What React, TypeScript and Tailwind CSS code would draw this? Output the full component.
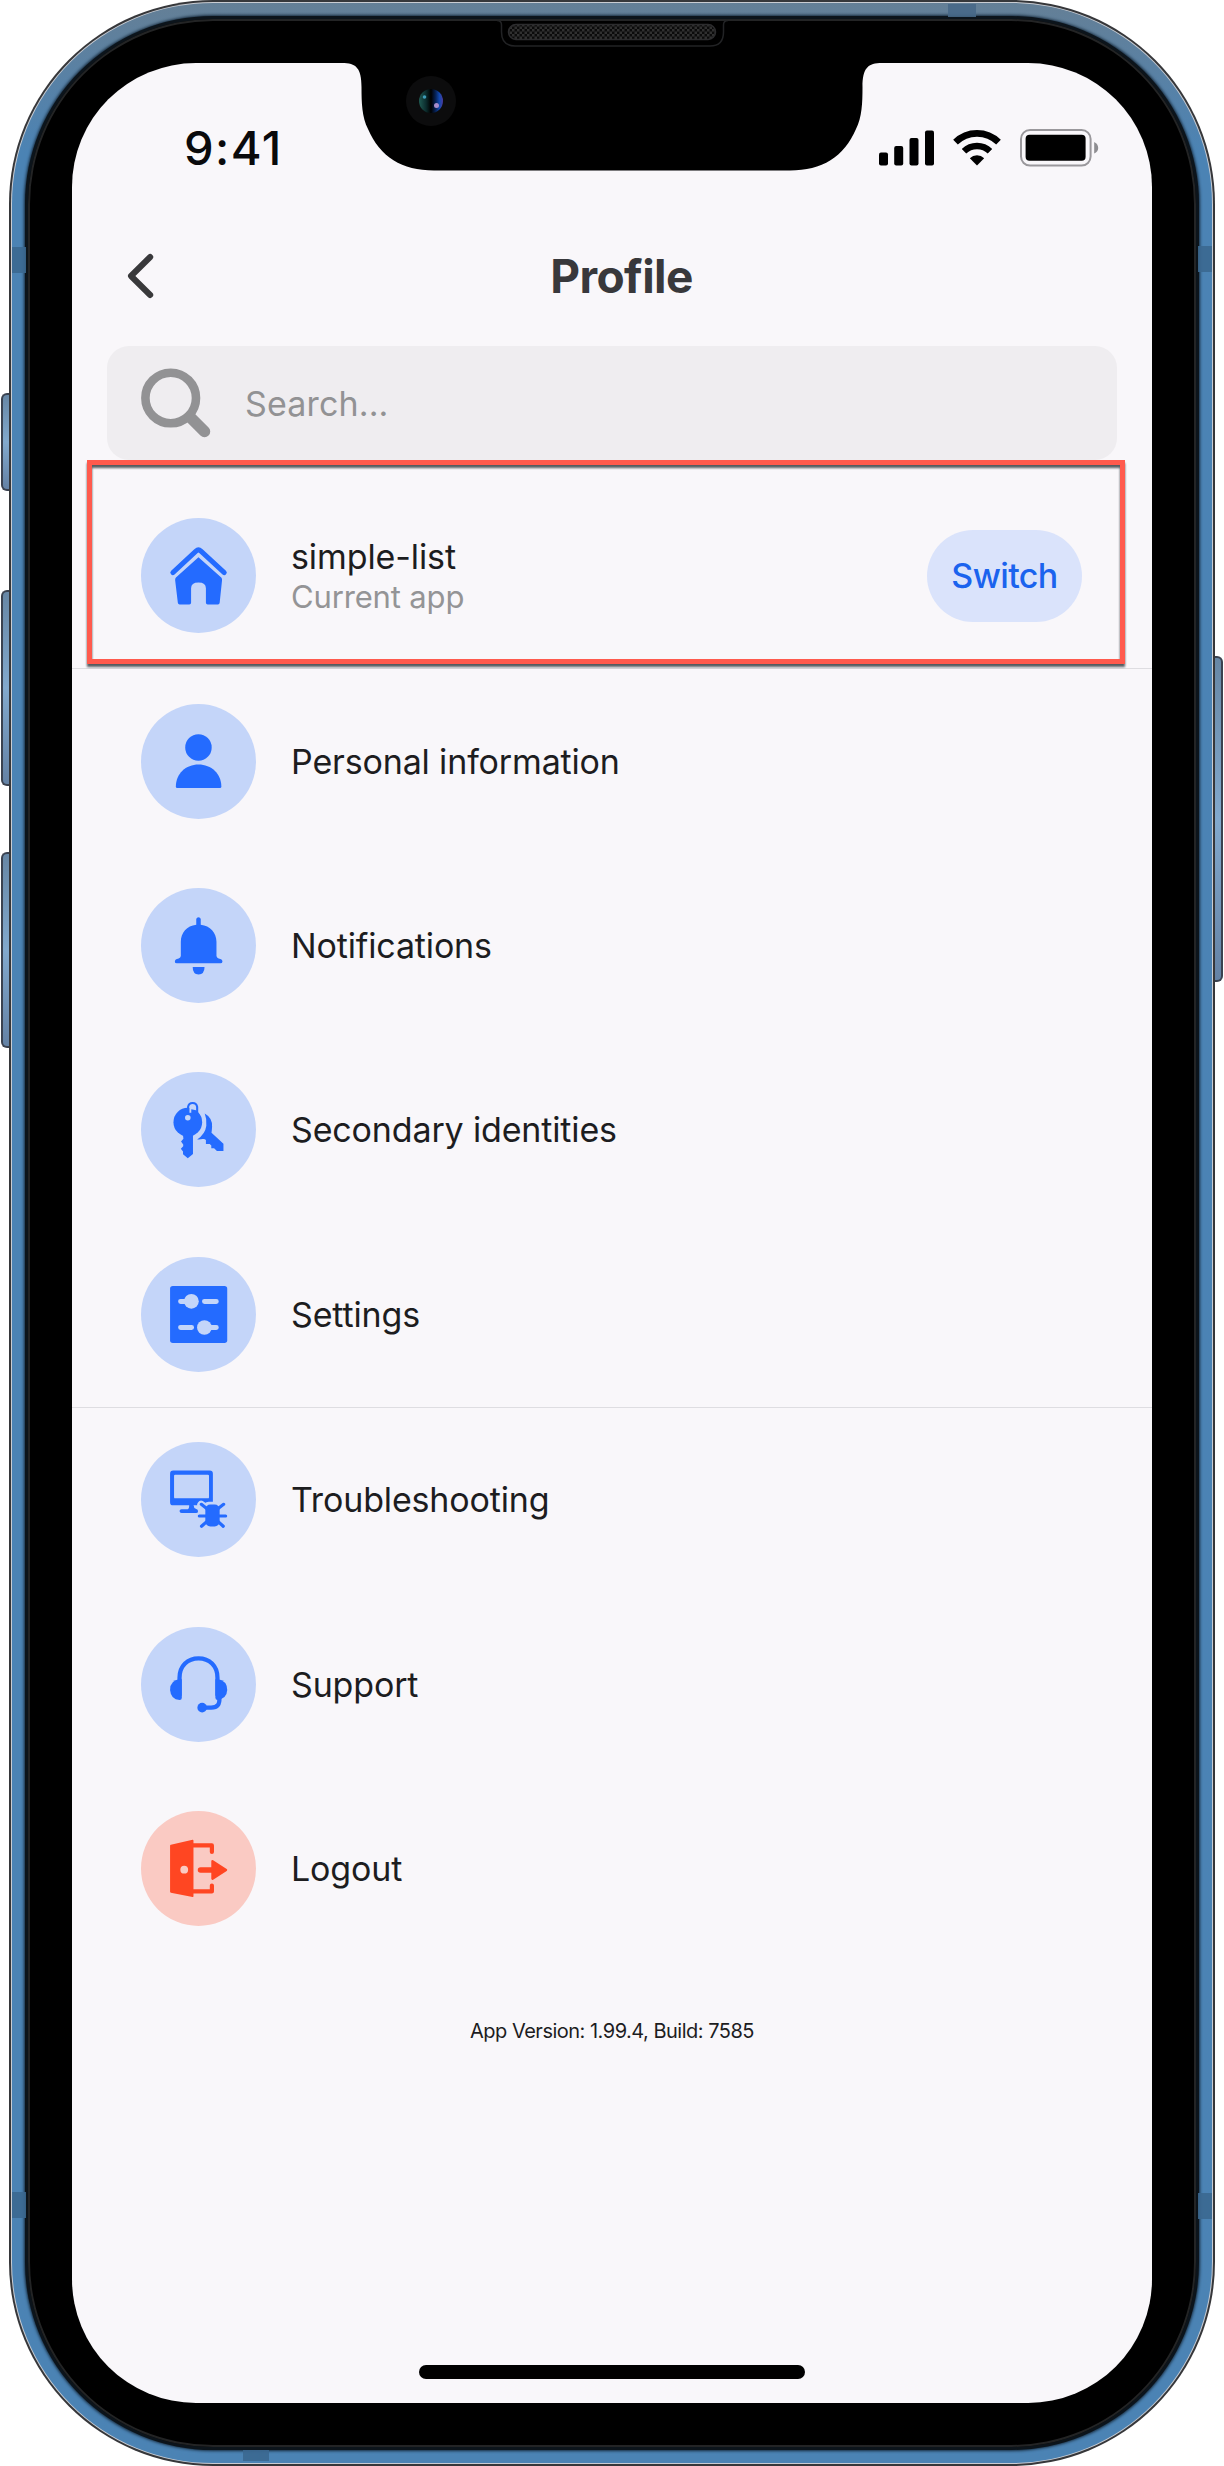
import React from "react";

type IconProps = { children: React.ReactNode; tone?: "blue" | "red" };

function Badge({ children, tone = "blue" }: IconProps) {
  return (
    <span
      className={
        tone === "blue"
          ? "block size-[115px] shrink-0 rounded-full bg-[#c4d5f9] text-[#246bff]"
          : "block size-[115px] shrink-0 rounded-full bg-[#facac3] text-[#ff4622]"
      }
    >
      <svg viewBox="0 0 115.5 115.5" className="size-full" fill="currentColor">
        {children}
      </svg>
    </span>
  );
}

const HomeIcon = (
  <>
    <path d="M32 54.8 L55.2 33.2 Q57.7 31 60.2 33.2 L83.6 54.8" fill="none" stroke="currentColor" strokeWidth="5" strokeLinecap="round" />
    <path d="M57.7 39.5 L80.6 59.8 Q81.6 60.8 81.4 62.5 L79 85.2 Q78.8 86.8 77.3 86.8 H67 Q65.2 86.8 65.2 85 V70.5 Q65.2 64.7 57.7 64.7 Q50.3 64.7 50.3 70.5 V85 Q50.3 86.8 48.5 86.8 H38.8 Q37.2 86.8 37 85.2 L34.3 62.5 Q34.1 60.8 35.1 59.8 Z" />
  </>
);

const PersonIcon = (
  <>
    <circle cx="57.7" cy="43.6" r="13.3" />
    <path d="M35 83 C35 70 45 60.7 57.8 60.7 C70.6 60.7 80.7 70 80.7 83 Q80.7 84.4 79.3 84.4 H36.4 Q35 84.4 35 83 Z" />
  </>
);

const BellIcon = (
  <>
    <path d="M55.5 37 V31.2 A2.3 2.3 0 0 1 60 31.2 V37 C69.5 38 75.8 45 75.8 54 V68.4 Q76 70 78 70.9 Q81.8 71.6 81.8 74 Q81.6 75.7 79.8 75.7 H36 Q34 75.7 34 74 Q34 71.6 37.8 70.9 Q39.8 70 40 68.4 V54 C40 45 46 38 55.5 37 Z" />
    <path d="M51.9 79.4 H63.8 Q63.8 86.8 57.8 86.8 Q51.9 86.8 51.9 79.4 Z" />
  </>
);

const KeysIcon = (
  <>
    <circle cx="47" cy="50.4" r="14.4" />
    <path d="M42 62 H52.2 V82.3 L47 86.6 L42.2 82.5 V79.8 L40 77.2 L42.4 74.6 L42.4 72.8 L40.2 69.8 L42.6 67 Z" />
    <path d="M48.6 41 V34.5 A3.6 3.6 0 0 1 55.4 34.5 V38.5 L53 38 L50.5 37.5 V41 Z" className="fill-[#c4d5f9]" />
    <path d="M47.3 41 V35 A4.6 4.6 0 0 1 56.4 35 V42" fill="none" stroke="currentColor" strokeWidth="2.1" />
    <circle cx="47" cy="46" r="2.8" className="fill-[#c4d5f9]" />
    <path d="M64 41.7 Q71.8 46 71.4 55 Q71.2 58.5 70.8 61 L82.8 72 V79.4 H76.3 L73.4 76.6 H70.6 V73.8 L69 72.4 H65.2 V68.4 Q64 67 62 67.4 Q58.5 68.2 56.4 67.7 Q64.5 62.5 65.6 54 Q66.2 47 64 41.7 Z" />
  </>
);

const SettingsIcon = (
  <>
    <rect x="29.2" y="29.1" width="57.4" height="57.3" rx="2.8" />
    <g stroke="#c4d5f9" strokeWidth="5" strokeLinecap="round">
      <path d="M39.8 44.7 H50 M63.8 44.7 H75.6 M39.8 70.8 H50.8 M64 70.8 H75.6" />
    </g>
    <circle cx="50.6" cy="44.5" r="7.4" className="fill-[#c4d5f9]" />
    <circle cx="63.7" cy="70.8" r="7.4" className="fill-[#c4d5f9]" />
  </>
);

const BugMonitorIcon = (
  <>
    <path fillRule="evenodd" d="M32.4 28.7 H69 Q72.2 28.7 72.2 32 V60.4 Q72.2 63.6 69 63.6 H52.8 Q52.8 66.4 55.5 67.4 Q57.3 68 57.3 69.5 Q57.3 71.4 55.3 71.4 H40.8 Q38.7 71.4 38.7 69.4 Q38.7 67.6 40.8 67.5 H47 Q48.4 67.4 48.4 63.6 H32.4 Q29.2 63.6 29.2 60.4 V32 Q29.2 28.7 32.4 28.7 Z M34.3 32.8 Q33.2 32.8 33.2 34 V55.4 Q33.2 56.6 34.3 56.6 H67.2 Q68.3 56.6 68.3 55.4 V34 Q68.3 32.8 67.2 32.8 Z" />
    <g stroke="#c4d5f9" strokeWidth="8" strokeLinecap="round" fill="none">
      <path d="M60.5 63 L66 66.8 M83.5 63 L77 66.8 M60 74.3 H66" />
      <rect x="66" y="64" width="11" height="18" rx="2" />
    </g>
    <g stroke="currentColor" strokeWidth="3.2" strokeLinecap="round">
      <path d="M60.6 62.6 L66 66.8 M83 62.6 L77.5 66.8 M58.6 74.3 H85 M60.8 84.6 L66 80 M82.6 84.6 L77.5 80" />
    </g>
    <rect x="64.6" y="62.8" width="14.4" height="22" rx="5" />
  </>
);

const SupportIcon = (
  <>
    <path d="M38.7 69 V51 C38.7 39 47 31.5 57.8 31.5 C68.6 31.5 76.8 39 76.8 51 V69 M78.6 70 C79.5 78 76.5 80.9 70.5 80.9 H61" fill="none" stroke="currentColor" strokeWidth="4.3" />
    <path d="M39 52.3 Q29.2 53.5 29.2 63.3 Q30 73.2 38.8 73.2 Q41 73.2 41 71 V52.5 Z" />
    <path d="M76.8 52.3 Q86.6 54 86.6 63.3 Q86.2 71.6 77.2 73.2 Q74.7 73.2 74.7 71 V52.5 Z" />
    <circle cx="61.4" cy="81" r="4.8" />
  </>
);

const LogoutIcon = (
  <>
    <path d="M29.2 34.8 Q29.2 34.2 30 34 L51.8 28.9 Q52.7 28.8 52.7 29.8 V85.6 Q52.7 86.6 51.8 86.4 L30 82 Q29.2 81.8 29.2 81.2 Z" />
    <circle cx="43.4" cy="58.9" r="3.9" className="fill-[#facac3]" />
    <path d="M52 34.6 H71.2 V41.2 M52 80.8 H71.2 V74.8" fill="none" stroke="currentColor" strokeWidth="4.2" strokeLinecap="round" strokeLinejoin="round" />
    <path d="M59.8 59.2 H72" stroke="currentColor" strokeWidth="5.6" strokeLinecap="round" />
    <path d="M71.8 50.4 L85.4 59.2 L71.8 68 Z" stroke="currentColor" strokeWidth="2.4" strokeLinejoin="round" />
  </>
);

function Row({ icon, label, tone }: { icon: React.ReactNode; label: string; tone?: "blue" | "red" }) {
  return (
    <li className="flex h-[184.4px] items-center gap-[35px] pl-[69px]">
      <Badge tone={tone}>{icon}</Badge>
      <span className="text-[34px] tracking-[-0.15px] text-[#1d1d1f]">{label}</span>
    </li>
  );
}

function StatusBar() {
  return (
    <div className="flex h-[165px] shrink-0 items-center justify-between pt-[5px] pr-[53px] pl-[112px]">
      <span className="text-[47px] font-medium tracking-[1.4px] text-[#0a0a0c]">9:41</span>
      <div className="flex items-center gap-[19px]">
        <svg viewBox="0 0 55 36" className="h-9 w-[55px]">
          <rect x="0" y="22.5" width="9" height="13" rx="2" />
          <rect x="15.2" y="16" width="9" height="19.5" rx="2" />
          <rect x="30.5" y="8" width="9" height="27.5" rx="2" />
          <rect x="46" y="0.5" width="9" height="35" rx="2" />
        </svg>
        <svg viewBox="0 0 48 36" className="h-9 w-12">
          <path d="M2.5 12.2 A30.5 30.5 0 0 1 45.5 12.2" fill="none" stroke="#000" strokeWidth="6.6" />
          <path d="M11 21.3 A18.6 18.6 0 0 1 37 21.3" fill="none" stroke="#000" strokeWidth="6.4" />
          <path d="M16.8 28.2 A10.4 10.4 0 0 1 31.2 28.2 L24 35.5 Z" />
        </svg>
        <svg viewBox="0 0 79 38" className="h-[38px] w-[79px]">
          <rect x="1" y="1" width="69.6" height="35.6" rx="9" fill="none" stroke="#9a989c" strokeWidth="2" />
          <rect x="5.6" y="5.8" width="60" height="26" rx="4" />
          <path d="M74.2 13 Q78.2 15.2 78.2 19 Q78.2 22.8 74.2 24.6 Z" fill="#8e8d91" />
        </svg>
      </div>
    </div>
  );
}

function Screen() {
  return (
    <div className="relative flex h-[2340px] w-[1080px] flex-col overflow-hidden rounded-[124px] bg-[#f9f7fa]">
      <StatusBar />
      <header className="relative flex h-24 shrink-0 items-center justify-center">
        <svg viewBox="0 0 32 48" className="absolute top-6 left-[53px] h-12 w-8" fill="none" stroke="#39393b" strokeWidth="6" strokeLinecap="round" strokeLinejoin="round">
          <path d="M25.2 5 L6 24 L25.2 43" />
        </svg>
        <h1 className="pl-[19px] text-[46px] font-bold tracking-[-0.6px] text-[#38383b]">Profile</h1>
      </header>
      <div className="mx-[35px] mt-[22px] flex h-[114px] shrink-0 items-center rounded-[22px] bg-[#efedf0] pl-[34px] text-[#929294]">
        <svg viewBox="0 0 70 70" className="size-[70px]" fill="none" stroke="currentColor">
          <circle cx="29.7" cy="30" r="25.3" strokeWidth="8.6" />
          <path d="M49 49 L63.5 63.5" strokeWidth="11.5" strokeLinecap="round" />
        </svg>
        <span className="pl-[34px] text-[34px] tracking-[0.15px]">Search...</span>
      </div>
      <div className="relative mt-[23px] flex h-[185px] shrink-0 items-center pr-[70px] pl-[69px]">
        <Badge>{HomeIcon}</Badge>
        <div className="flex flex-1 flex-col pl-[35px]">
          <span className="text-[34px] leading-[42px] tracking-[-0.1px] text-[#1d1d1f]">simple-list</span>
          <span className="text-[31px] leading-[38px] tracking-[-0.15px] text-[#949496]">Current app</span>
        </div>
        <button className="h-[92px] w-[155px] rounded-[46px] bg-[#dae3fb] text-[34px] font-medium tracking-[-0.6px] text-[#1b63ee]">Switch</button>
        <div className="absolute top-[-23px] left-[15px] h-[204px] w-[1038px] border-[5px] border-[#ff5a4d] [filter:drop-shadow(0_3px_1px_rgba(30,40,45,0.75))]" />
      </div>
      <ul className="border-t border-[#dedde1]">
        <Row icon={PersonIcon} label="Personal information" />
        <Row icon={BellIcon} label="Notifications" />
        <Row icon={KeysIcon} label="Secondary identities" />
        <Row icon={SettingsIcon} label="Settings" />
      </ul>
      <ul className="border-t border-[#dedde1]">
        <Row icon={BugMonitorIcon} label="Troubleshooting" />
        <Row icon={SupportIcon} label="Support" />
        <Row icon={LogoutIcon} label="Logout" tone="red" />
      </ul>
      <p className="mt-[55px] text-center text-[20px] leading-[30px] tracking-[-0.5px] text-[#1d1d1f]">App Version: 1.99.4, Build: 7585</p>
      <div className="mx-auto mt-auto mb-[24px] h-[14px] w-[386px] shrink-0 rounded-full bg-black" />
    </div>
  );
}

function SideButton({ className }: { className: string }) {
  return <div className={"absolute w-2 border-2 border-[#3a4250] bg-linear-to-b from-[#6787a5] via-[#82a9cd] to-[#6482a5] " + className} />;
}

export default function App() {
  return (
    <div className="relative h-[2466px] w-[1224px] overflow-hidden bg-white px-[9px] font-[Inter,sans-serif]">
      <SideButton className="top-[393px] left-[1px] h-[98px] rounded-l-md border-r-0" />
      <SideButton className="top-[590px] left-[1px] h-[196px] rounded-l-md border-r-0" />
      <SideButton className="top-[852px] left-[1px] h-[196px] rounded-l-md border-r-0" />
      <SideButton className="top-[656px] left-[1215px] h-[326px] rounded-r-md border-l-0" />
      <div className="rounded-[204px] bg-[#36373a] p-[2px]">
        <div className="rounded-[202px] bg-[#c9ccd2] p-px">
          <div className="rounded-[201px] bg-linear-to-b from-[#647f96] to-[#4b83b4] to-[150px] p-[13px]">
            <div className="rounded-[188px] bg-[#0c141b] p-[3px] shadow-[0_0_3px_1px_#16293b]">
              <div className="rounded-[185px] bg-black p-[44px] shadow-[inset_0_0_0_2px_#232425]">
                <Screen />
              </div>
            </div>
          </div>
        </div>
      </div>
      <div className="absolute top-[247px] left-3 h-[26px] w-[14px] bg-[#3b6890]/90" />
      <div className="absolute top-[2192px] left-3 h-[26px] w-[14px] bg-[#3b6890]/90" />
      <div className="absolute top-[246px] left-[1198px] h-[26px] w-[14px] bg-[#3b6890]/90" />
      <div className="absolute top-[2193px] left-[1198px] h-[26px] w-[14px] bg-[#3b6890]/90" />
      <div className="absolute top-1 left-[948px] h-[13px] w-7 bg-[#476887]/90" />
      <div className="absolute top-[2450px] left-[243px] h-[11px] w-[26px] bg-[#3b6890]/90" />
      <svg viewBox="0 0 540 152" className="absolute top-[19px] left-[342px] h-[152px] w-[540px]">
        <defs>
          <pattern id="mesh" width="5" height="5" patternUnits="userSpaceOnUse">
            <rect width="5" height="5" fill="#0b0b0b" />
            <rect width="2.5" height="2.5" fill="#303030" />
            <rect x="2.5" y="2.5" width="2.5" height="2.5" fill="#303030" />
          </pattern>
          <linearGradient id="lens" x1="0" x2="1">
            <stop offset="0" stopColor="#1f5a52" />
            <stop offset="0.3" stopColor="#0b2b2c" />
            <stop offset="0.5" stopColor="#000" />
            <stop offset="0.7" stopColor="#06245c" />
            <stop offset="0.85" stopColor="#1149b0" />
            <stop offset="1" stopColor="#4b3a9c" />
          </linearGradient>
        </defs>
        <path d="M0 44 C14 44 19.5 49 19.5 68 C19.5 84 20 98 26 110 C38 138 60 151.500 92 151.500 H448 C480 151.500 502 138 514 110 C520 98 520.500 84 520.500 68 C520.500 49 526 44 540 44 Z" />
        <path d="M155 1.500 Q159.500 1.500 159.500 6 V13 Q159.500 27 173 27 H368 Q381.500 27 381.500 13 V6 Q381.500 1.500 386 1.500" fill="none" stroke="#222325" strokeWidth="1.500" />
        <rect x="166.500" y="5.500" width="207" height="15" rx="7.500" fill="url(#mesh)" stroke="#2c2c2e" strokeWidth="1.500" />
        <circle cx="89" cy="82" r="25" fill="#0c0c0d" />
        <circle cx="89" cy="82" r="12" fill="url(#lens)" />
        <circle cx="82.500" cy="78" r="1.800" fill="#3e9cb8" />
        <circle cx="94.500" cy="86.500" r="2.500" fill="#a78ccb" />
      </svg>
    </div>
  );
}
